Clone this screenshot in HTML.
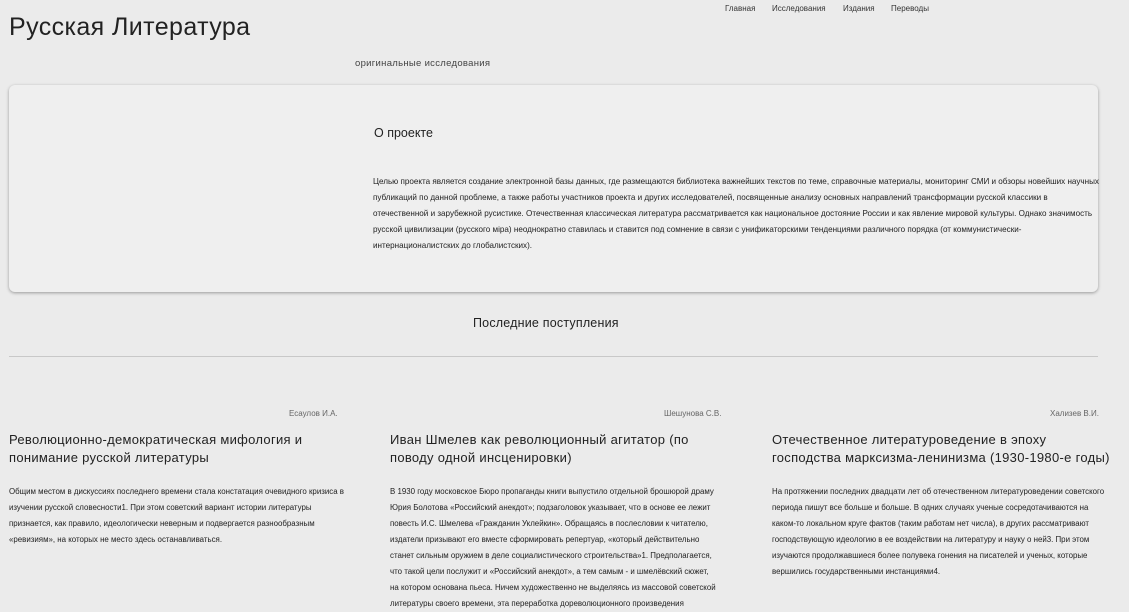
<!DOCTYPE html>
<html><head><meta charset="utf-8"><style>
body{margin:0;width:1129px;height:611px;overflow:hidden;background:#ebebeb;font-family:"Liberation Sans","Noto Sans CJK SC",sans-serif;color:#222;position:relative}
.a{position:absolute;white-space:nowrap}
.nav{font-size:8px;top:4px;color:#333}
.card{position:absolute;left:9px;top:85px;width:1089px;height:207px;background:#efefef;border-radius:6px;box-shadow:0 1px 3px rgba(0,0,0,.35)}
.p{font-size:8.1px;line-height:16px;color:#222}
.p2{font-size:7.9px;line-height:16px;color:#222}
.t{font-size:13px;line-height:18px;color:#222;letter-spacing:.3px}
.au{font-size:8px;color:#666}
</style></head><body>
<div class="a nav" style="left:725px">Главная</div>
<div class="a nav" style="left:772px">Исследования</div>
<div class="a nav" style="left:843px">Издания</div>
<div class="a nav" style="left:891px">Переводы</div>
<div class="a" style="left:9px;top:13px;font-size:25px;letter-spacing:.4px;color:#222">Русская Литература</div>
<div class="a" style="left:355px;top:58px;font-size:9.5px;letter-spacing:.3px;color:#444">оригинальные исследования</div>
<div class="card"></div>
<div class="a" style="left:374px;top:126px;font-size:12.5px">О проекте</div>
<div class="a p" style="left:373px;top:174px">Целью проекта является создание электронной базы данных, где размещаются библиотека важнейших текстов по теме, справочные материалы, мониторинг СМИ и обзоры новейших научных<br>публикаций по данной проблеме, а также работы участников проекта и других исследователей, посвященные анализу основных направлений трансформации русской классики в<br>отечественной и зарубежной русистике. Отечественная классическая литература рассматривается как национальное достояние России и как явление мировой культуры. Однако значимость<br>русской цивилизации (русского міра) неоднократно ставилась и ставится под сомнение в связи с унификаторскими тенденциями различного порядка (от коммунистически-<br>интернационалистских до глобалистских).</div>
<div class="a" style="left:473px;top:316px;font-size:12.5px;letter-spacing:.2px">Последние поступления</div>
<div style="position:absolute;left:9px;top:356px;width:1089px;height:1px;background:#c8c8c8"></div>
<div class="a au" style="left:289px;top:409px">Есаулов И.А.</div>
<div class="a au" style="left:664px;top:409px">Шешунова С.В.</div>
<div class="a au" style="left:1050px;top:409px">Хализев В.И.</div>
<div class="a t" style="left:9px;top:431px">Революционно-демократическая мифология и<br>понимание русской литературы</div>
<div class="a t" style="left:390px;top:431px">Иван Шмелев как революционный агитатор (по<br>поводу одной инсценировки)</div>
<div class="a t" style="left:772px;top:431px">Отечественное литературоведение в эпоху<br>господства марксизма-ленинизма (1930-1980-е годы)</div>
<div class="a p2" style="left:9px;top:484px">Общим местом в дискуссиях последнего времени стала констатация очевидного кризиса в<br>изучении русской словесности1. При этом советский вариант истории литературы<br>признается, как правило, идеологически неверным и подвергается разнообразным<br>«ревизиям», на которых не место здесь останавливаться.</div>
<div class="a p2" style="left:390px;top:484px">В 1930 году московское Бюро пропаганды книги выпустило отдельной брошюрой драму<br>Юрия Болотова «Российский анекдот»; подзаголовок указывает, что в основе ее лежит<br>повесть И.С. Шмелева «Гражданин Уклейкин». Обращаясь в послесловии к читателю,<br>издатели призывают его вместе сформировать репертуар, «который действительно<br>станет сильным оружием в деле социалистического строительства»1. Предполагается,<br>что такой цели послужит и «Российский анекдот», а тем самым - и шмелёвский сюжет,<br>на котором основана пьеса. Ничем художественно не выделяясь из массовой советской<br>литературы своего времени, эта переработка дореволюционного произведения</div>
<div class="a p2" style="left:772px;top:484px">На протяжении последних двадцати лет об отечественном литературоведении советского<br>периода пишут все больше и больше. В одних случаях ученые сосредотачиваются на<br>каком-то локальном круге фактов (таким работам нет числа), в других рассматривают<br>господствующую идеологию в ее воздействии на литературу и науку о ней3. При этом<br>изучаются продолжавшиеся более полувека гонения на писателей и ученых, которые<br>вершились государственными инстанциями4.</div>
</body></html>
